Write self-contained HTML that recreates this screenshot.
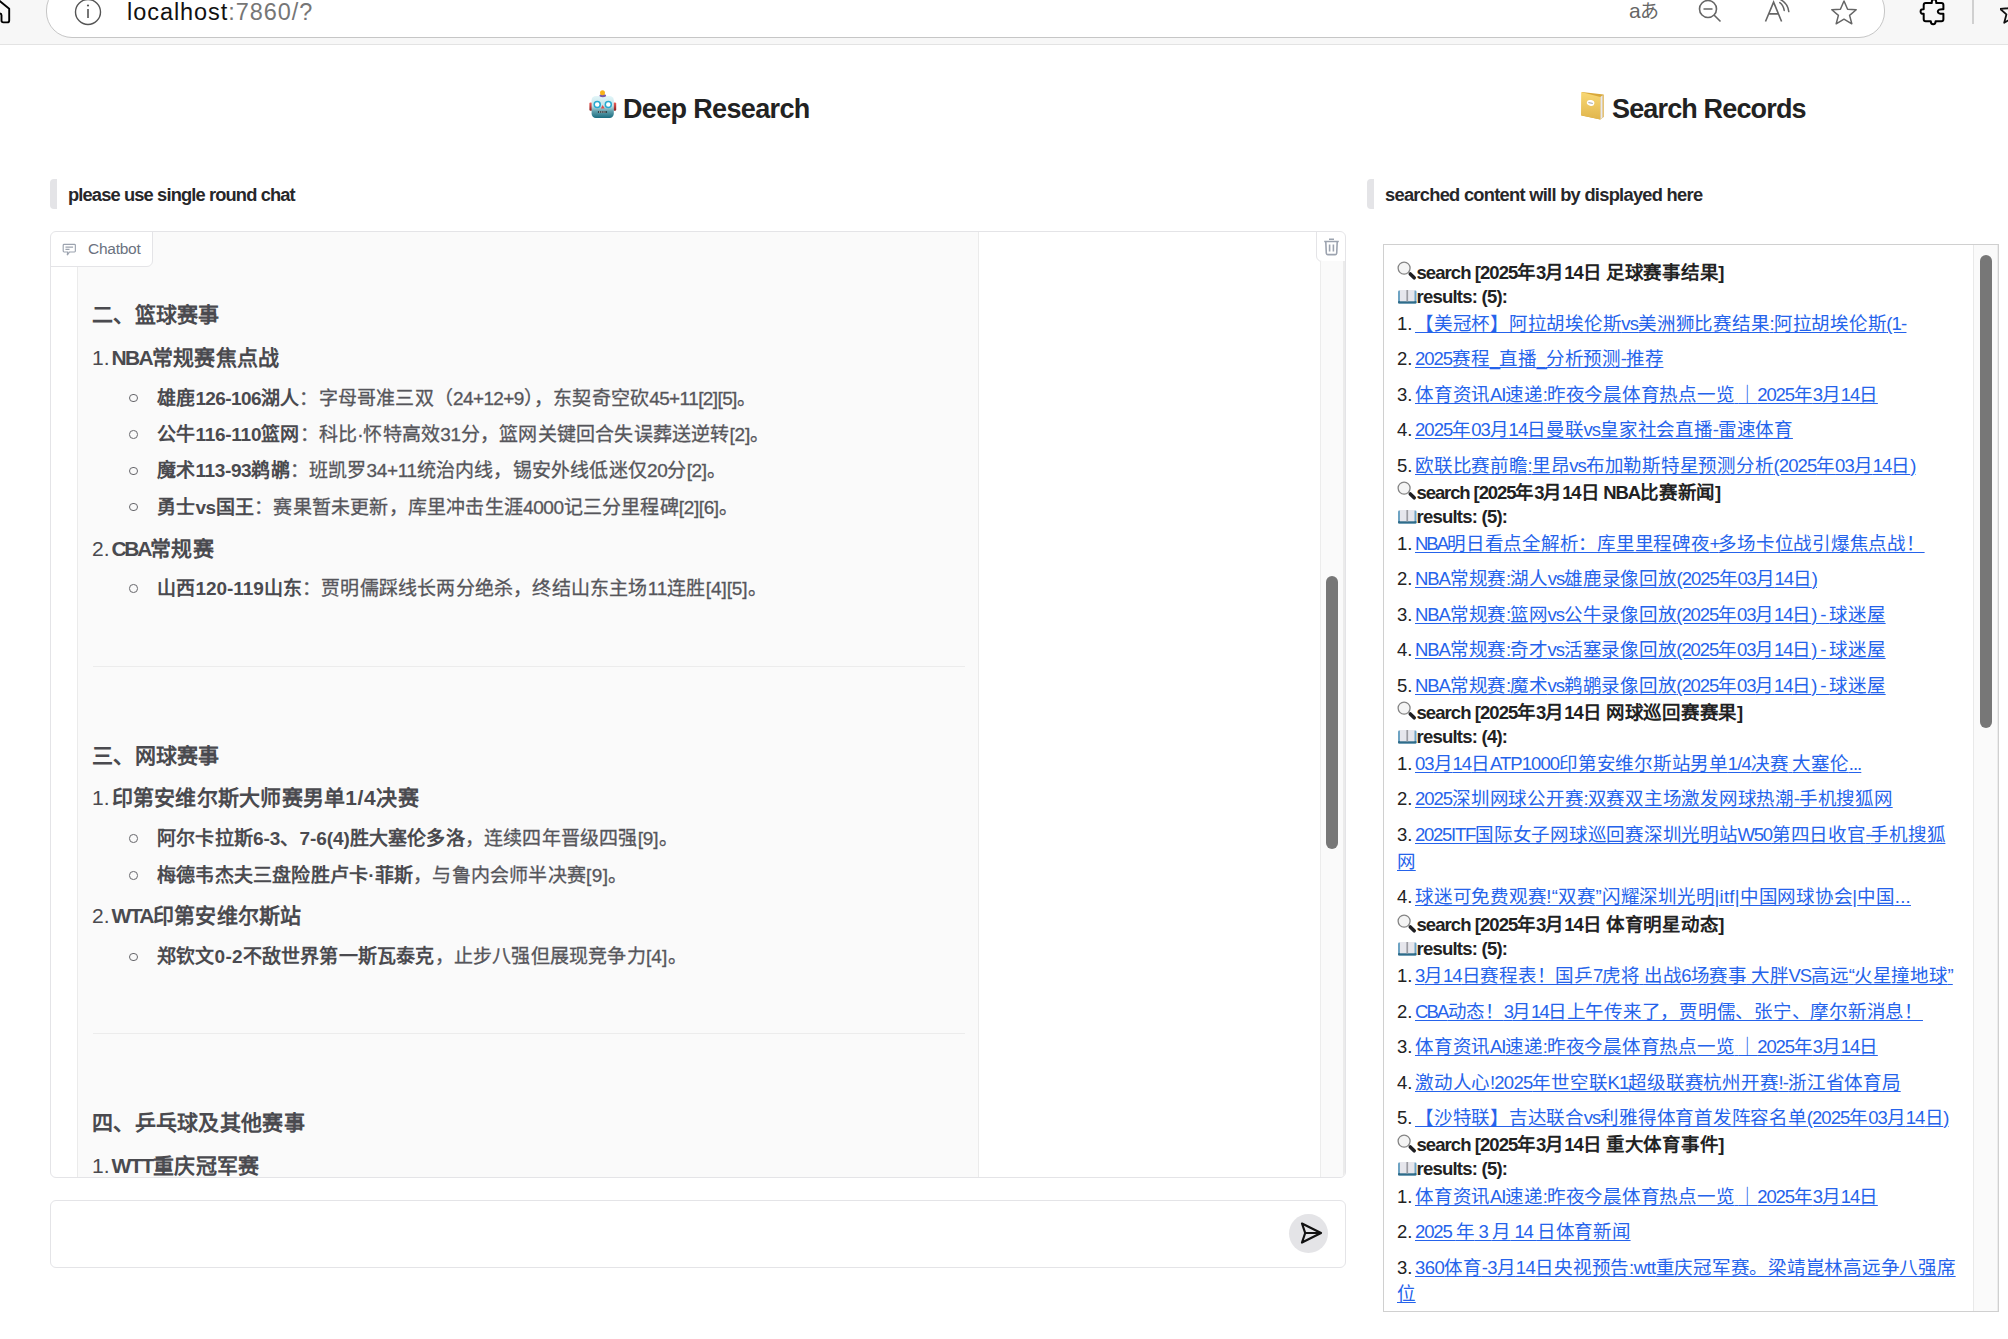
<!DOCTYPE html>
<html lang="zh-CN"><head><meta charset="utf-8">
<style>
*{box-sizing:border-box;margin:0;padding:0}
html,body{width:2008px;height:1339px;overflow:hidden;background:#fff}
body{position:relative;font-family:"Liberation Sans",sans-serif;color:#27272a}
.abs{position:absolute}
/* browser chrome */
#tb{position:absolute;left:0;top:0;width:2008px;height:45px;background:#f7f7f7;border-bottom:1px solid #e3e3e3}
#addr{position:absolute;left:45.5px;top:-16px;width:1839.5px;height:54px;background:#fff;border:1px solid #c6c6c6;border-radius:26px}
#url{position:absolute;left:127px;top:-3px;font-size:23.5px;line-height:30px;color:#111;letter-spacing:0.95px}
#url span{color:#767676}
.ico{position:absolute}
/* titles */
.title{position:absolute;font-size:27px;font-weight:bold;color:#222;line-height:40px;white-space:nowrap}
.emo2{position:absolute;font-size:26px;line-height:34px}
.info{position:absolute;top:179px;width:7px;height:30px;background:#e4e4e7;border-radius:4px 0 0 4px}
.infot{position:absolute;top:183px;font-size:18.3px;font-weight:bold;line-height:24px;color:#27272a;white-space:nowrap}
/* chatbot */
#chat{position:absolute;left:50px;top:231px;width:1296px;height:947px;border:1px solid #e4e4e7;border-radius:6px;overflow:hidden;background:#fff}
#bubble{position:absolute;left:26px;top:-40px;width:902px;height:1000px;background:#fafafa;border:1px solid #ebebeb;border-radius:6px}
#tab{position:absolute;left:-1px;top:-1px;width:103px;height:36px;background:#fff;border:1px solid #e4e4e7;border-radius:6px 0 6px 0}
#tab .t{position:absolute;left:37px;top:6px;font-size:15.5px;line-height:22px;color:#6b7280;letter-spacing:-0.25px}
#trash{position:absolute;left:1265px;top:-1px;width:30px;height:31px;background:#fff;border:1px solid #e4e4e7;border-radius:0 6px 0 6px}
#track{position:absolute;left:1269px;top:29px;width:25px;height:920px;background:#fafafa;border-left:1px solid #ececec;border-right:2px solid #ebebeb}
#thumb{position:absolute;left:1275px;top:344px;width:12px;height:273px;background:#777;border-radius:6px}
.ln,.pre{position:absolute;white-space:nowrap}
.h2{font-size:21px;font-weight:bold;color:#4a4a4f}
.h3{font-size:21px;font-weight:bold;color:#4a4a4f}
.pre.h3{font-weight:normal}
.li{font-size:19px;color:#56565b;-webkit-text-stroke:0.3px #56565b}
.li b{color:#4a4a4f;font-weight:600;-webkit-text-stroke:0}
.li b .l{font-weight:700}
.bul{position:absolute;left:78.3px;width:8.6px;height:8.6px;border:1.3px solid #66666b;border-radius:50%}
.hr{position:absolute;left:42px;width:872px;height:1.5px;background:#ececec}
/* input */
#inp{position:absolute;left:50px;top:1200px;width:1296px;height:68px;border:1px solid #e4e4e7;border-radius:6px;background:#fff}
#send{position:absolute;left:1289px;top:1214px;width:39px;height:39px;border-radius:50%;background:#e4e4e7}
/* results */
#res{position:absolute;left:1383px;top:244px;width:616px;height:1068px;border:1px solid #d0d0d0;overflow:hidden;background:#fff}
#rtrack{position:absolute;left:589px;top:0;width:25px;height:1068px;background:#fafafa;border-left:1px solid #e9e9e9;border-right:1px solid #ececec}
#rthumb{position:absolute;left:596px;top:10px;width:11.5px;height:473px;background:#777;border-radius:6px}
.rs,.rr{font-size:18.5px;font-weight:bold;color:#222}
.ri{font-size:18.5px;color:#222}
.ri a{color:#2563eb;text-decoration:underline;text-underline-offset:2px}
.emo{font-size:17px;font-weight:normal}
.bk{display:inline-block;width:19.5px;height:1px}
.book{position:absolute;left:13.5px}
.mag{position:absolute;left:10px}
</style></head><body>
<div id="tb">
  <svg class="ico" style="left:0;top:0" width="14" height="26" viewBox="0 0 14 26"><path d="M-1 0.4 L9.2 8.7 V20.4 Q9.2 22.4 7.2 22.4 H3.4 Q1.5 22.4 1.5 20.4 V15.3 Q1.5 13.4 -0.4 13.4" fill="none" stroke="#000" stroke-width="1.9" stroke-linejoin="round"/></svg>
  <div id="addr"></div>
  <svg class="ico" style="left:74px;top:-2px" width="28" height="28" viewBox="0 0 28 28"><circle cx="14" cy="14" r="12.5" fill="none" stroke="#555" stroke-width="1.4"/><rect x="13.2" y="11" width="1.6" height="9" fill="#555"/><circle cx="14" cy="7.5" r="1.1" fill="#555"/></svg>
  <div id="url">localhost<span>:7860/?</span></div>
  <!-- aあ -->
  <div class="abs" style="left:1629px;top:-3px;font-size:21px;line-height:28px;color:#666;letter-spacing:-0.5px">a<span style="font-size:19px">あ</span></div>
  <!-- zoom out -->
  <svg class="ico" style="left:1697px;top:-1px" width="28" height="26" viewBox="0 0 28 26"><circle cx="11" cy="10" r="8.5" fill="none" stroke="#666" stroke-width="1.6"/><path d="M6.5 10 H15.5 M17 16 L23.5 22.5" stroke="#666" stroke-width="1.6" fill="none"/></svg>
  <!-- A)) -->
  <svg class="ico" style="left:1763px;top:-1px" width="30" height="26" viewBox="0 0 30 26"><path d="M2.5 22.5 L10.6 3.2 L18.6 22.5 M5.6 14.9 H15.6" stroke="#666" stroke-width="1.6" fill="none"/><path d="M16.8 3.6 Q20.4 6.2 21.2 11.4 M17.6 0.6 Q24.8 4.4 25.8 12.6" stroke="#666" stroke-width="1.5" fill="none" stroke-linecap="round"/></svg>
  <!-- star -->
  <svg class="ico" style="left:1829px;top:-1px" width="30" height="28" viewBox="0 0 30 28"><path d="M15 2 L18.6 10.2 L27.2 10.8 L20.6 16.4 L22.8 24.8 L15 20.2 L7.2 24.8 L9.4 16.4 L2.8 10.8 L11.4 10.2 Z" fill="none" stroke="#666" stroke-width="1.5" stroke-linejoin="round"/></svg>
  <!-- puzzle -->
  <svg class="ico" style="left:1918px;top:-2px" width="30" height="30" viewBox="0 0 30 30"><path d="M7.7 4.9 H13.8 Q13.6 1.2 16 1.2 Q18.4 1.2 18.2 4.9 H23.4 Q25.4 4.9 25.4 6.9 V11.2 Q19.8 10.8 19.8 13.5 Q19.8 16.2 25.4 15.8 V21.2 Q25.4 23.2 23.4 23.2 H17.6 Q17.6 26.2 15.2 26.2 Q12.8 26.2 12.8 23.2 H7.7 Q5.7 23.2 5.7 21.2 V15.8 Q2.6 16.2 2.6 13.5 Q2.6 10.8 5.7 11.2 V6.9 Q5.7 4.9 7.7 4.9 Z" fill="none" stroke="#000" stroke-width="2" stroke-linejoin="round"/></svg>
  <div class="abs" style="left:1972px;top:0;width:1.5px;height:24px;background:#d0d0d0"></div>
  <svg class="ico" style="left:2000px;top:-2px" width="20" height="28" viewBox="0 0 20 28"><path d="M12 2 L15.6 10.2 L24 10.8 L17.6 16.4 L19.8 24.8 L12 20.2 L4.2 24.8 L6.4 16.4 L0 10.8 L8.4 10.2 Z" fill="none" stroke="#111" stroke-width="1.8" stroke-linejoin="round"/></svg>
</div>

<svg class="abs" style="left:584px;top:86px" width="38" height="38" viewBox="0 0 38 38"><defs><linearGradient id="rg" x1="0" y1="0" x2="0" y2="1"><stop offset="0" stop-color="#e3f6f9"/><stop offset="0.45" stop-color="#c3e3e8"/><stop offset="0.7" stop-color="#5e9eab"/><stop offset="1" stop-color="#1b6d80"/></linearGradient><linearGradient id="er" x1="0" y1="0" x2="0" y2="1"><stop offset="0" stop-color="#f0605a"/><stop offset="1" stop-color="#8a1a1a"/></linearGradient></defs><rect x="5.4" y="16.4" width="3" height="8.4" rx="1.2" fill="url(#er)"/><rect x="29.2" y="16.4" width="3" height="8.4" rx="1.2" fill="url(#er)"/><rect x="7.6" y="10" width="22.2" height="21.9" rx="4.2" fill="url(#rg)"/><ellipse cx="18.8" cy="9.6" rx="3.3" ry="1.7" fill="#7a5aa6"/><circle cx="18.5" cy="6.8" r="2.5" fill="#f8b21a"/><circle cx="13.2" cy="18.4" r="3" fill="#fff" stroke="#27a9cf" stroke-width="1.5"/><circle cx="24.3" cy="18.4" r="3" fill="#fff" stroke="#27a9cf" stroke-width="1.5"/><path d="M18.6 18.9 L16.9 22.4 H20.6 Z" fill="#e24a4a"/><rect x="13.9" y="24.9" width="9.2" height="2.2" rx="0.8" fill="#2a3b40"/><path d="M15 26 H22" stroke="#eee" stroke-width="1" stroke-dasharray="1.1 0.7"/></svg>
<div class="title" id="t1" style="left:623px;top:88.5px;letter-spacing:-0.65px">Deep Research</div>
<svg class="abs" style="left:1574px;top:86px" width="38" height="38" viewBox="0 0 38 38"><defs><linearGradient id="ng" x1="0" y1="0" x2="0" y2="1"><stop offset="0" stop-color="#f9d874"/><stop offset="1" stop-color="#e0b54c"/></linearGradient></defs><path d="M8 6 L29.7 8.6 V31 L26.3 33.6 L7.2 29.4 Z" fill="#d9a83a"/><path d="M26.3 11 L28.6 9.3 V31.6 L26.3 33.4 Z" fill="#e8e8ee"/><path d="M7.2 6.1 L26.3 10.9 V33.6 L7.2 29.3 Z" fill="url(#ng)"/><ellipse cx="16.6" cy="16.9" rx="3.8" ry="2.9" fill="#fff" transform="rotate(12 16.6 16.9)"/><path d="M14.4 16.6 L18.8 17.4" stroke="#888" stroke-width="0.8"/></svg>
<div class="title" id="t2" style="left:1612px;top:88.5px;letter-spacing:-0.85px">Search Records</div>

<div class="info" style="left:50px"></div>
<div class="infot" id="i1" style="left:68px;letter-spacing:-0.86px">please use single round chat</div>
<div class="info" style="left:1367px"></div>
<div class="infot" id="i2" style="left:1385px;letter-spacing:-0.72px">searched content will by displayed here</div>

<div id="chat">
  <div id="bubble"></div>
<div class="ln h2" style="top:66.4px;left:41px;letter-spacing:0.3px">二、篮球赛事</div>
<div class="pre h3" style="top:108.6px;left:41px">1.<span style="visibility:hidden">一</span></div><div class="ln h3" style="top:108.6px;left:60.5px;letter-spacing:0.25px"><span class="l" style="letter-spacing:-1.70px">NBA</span>常规赛焦点战</div>
<div class="bul" style="top:161.7px"></div>
<div class="ln li" style="top:150.5px;left:106px;letter-spacing:0.2px"><b>雄鹿<span class="l" style="letter-spacing:-0.60px">126-106</span>湖人</b>：字母哥准三双（<span class="l" style="letter-spacing:-0.60px">24+12+9</span>），东契奇空砍<span class="l" style="letter-spacing:-0.60px">45+11[2][5]</span>。</div>
<div class="bul" style="top:198.2px"></div>
<div class="ln li" style="top:187.0px;left:106px;letter-spacing:0.2px"><b>公牛<span class="l" style="letter-spacing:-0.26px">116-110</span>篮网</b>：科比<span class="l" style="letter-spacing:-0.26px">·</span>怀特高效<span class="l" style="letter-spacing:-0.26px">31</span>分，篮网关键回合失误葬送逆转<span class="l" style="letter-spacing:-0.26px">[2]</span>。</div>
<div class="bul" style="top:234.5px"></div>
<div class="ln li" style="top:223.3px;left:106px;letter-spacing:0.2px"><b>魔术<span class="l" style="letter-spacing:-0.37px">113-93</span>鹈鹕</b>：班凯罗<span class="l" style="letter-spacing:-0.37px">34+11</span>统治内线，锡安外线低迷仅<span class="l" style="letter-spacing:-0.37px">20</span>分<span class="l" style="letter-spacing:-0.37px">[2]</span>。</div>
<div class="bul" style="top:270.9px"></div>
<div class="ln li" style="top:259.7px;left:106px;letter-spacing:0.2px"><b>勇士<span class="l" style="letter-spacing:-0.40px">vs</span>国王</b>：赛果暂未更新，库里冲击生涯<span class="l" style="letter-spacing:-0.40px">4000</span>记三分里程碑<span class="l" style="letter-spacing:-0.40px">[2][6]</span>。</div>
<div class="pre h3" style="top:299.6px;left:41px">2.<span style="visibility:hidden">一</span></div><div class="ln h3" style="top:299.6px;left:60.5px;letter-spacing:0.25px"><span class="l" style="letter-spacing:-2.33px">CBA</span>常规赛</div>
<div class="bul" style="top:352.3px"></div>
<div class="ln li" style="top:341.1px;left:106px;letter-spacing:0.2px"><b>山西<span class="l" style="letter-spacing:-0.06px">120-119</span>山东</b>：贾明儒踩线长两分绝杀，终结山东主场<span class="l" style="letter-spacing:-0.06px">11</span>连胜<span class="l" style="letter-spacing:-0.06px">[4][5]</span>。</div>
<div class="hr" style="top:433.6px"></div>
<div class="ln h2" style="top:506.7px;left:41px;letter-spacing:0.3px">三、网球赛事</div>
<div class="pre h3" style="top:549.0px;left:41px">1.<span style="visibility:hidden">一</span></div><div class="ln h3" style="top:549.0px;left:60.5px;letter-spacing:0.25px">印第安维尔斯大师赛男单<span class="l" style="letter-spacing:0.67px">1/4</span>决赛</div>
<div class="bul" style="top:602.1px"></div>
<div class="ln li" style="top:590.9px;left:106px;letter-spacing:0.2px"><b>阿尔卡拉斯<span class="l" style="letter-spacing:-0.08px">6-3</span>、<span class="l" style="letter-spacing:-0.08px">7-6(4)</span>胜大塞伦多洛</b>，连续四年晋级四强<span class="l" style="letter-spacing:-0.08px">[9]</span>。</div>
<div class="bul" style="top:639.0px"></div>
<div class="ln li" style="top:627.8px;left:106px;letter-spacing:0.2px"><b>梅德韦杰夫三盘险胜卢卡<span class="l" style="letter-spacing:0.35px">·</span>菲斯</b>，与鲁内会师半决赛<span class="l" style="letter-spacing:0.35px">[9]</span>。</div>
<div class="pre h3" style="top:667.3px;left:41px">2.<span style="visibility:hidden">一</span></div><div class="ln h3" style="top:667.3px;left:60.5px;letter-spacing:0.25px"><span class="l" style="letter-spacing:-1.67px">WTA</span>印第安维尔斯站</div>
<div class="bul" style="top:720.5px"></div>
<div class="ln li" style="top:709.3px;left:106px;letter-spacing:0.2px"><b>郑钦文<span class="l" style="letter-spacing:0.20px">0-2</span>不敌世界第一斯瓦泰克</b>，止步八强但展现竞争力<span class="l" style="letter-spacing:0.20px">[4]</span>。</div>
<div class="hr" style="top:800.7px"></div>
<div class="ln h2" style="top:874.2px;left:41px;letter-spacing:0.3px">四、乒乓球及其他赛事</div>
<div class="pre h3" style="top:916.6px;left:41px">1.<span style="visibility:hidden">一</span></div><div class="ln h3" style="top:916.6px;left:60.5px;letter-spacing:0.25px"><span class="l" style="letter-spacing:-1.33px">WTT</span>重庆冠军赛</div>

  <div id="tab">
    <svg class="abs" style="left:11px;top:11px" width="15" height="13.5" viewBox="0 0 16 15"><path d="M2 1.5 H13.5 Q14.5 1.5 14.5 2.5 V9 Q14.5 10 13.5 10 H8 L5.5 13.5 L6 10 H2 Q1 10 1 9 V2.5 Q1 1.5 2 1.5 Z" fill="none" stroke="#9ca3af" stroke-width="1.3"/><path d="M3.5 4.5 H12 M3.5 7 H8" stroke="#9ca3af" stroke-width="1.3"/></svg>
    <div class="t">Chatbot</div>
  </div>
  <div id="trash">
    <svg class="abs" style="left:6px;top:6px" width="17" height="18" viewBox="0 0 17 18"><path d="M6 1.2 H11 M1.2 3.5 H15.8" stroke="#9ca3af" stroke-width="1.6"/><path d="M2.8 4 L3.3 15.2 Q3.4 16.6 4.8 16.6 H12.2 Q13.6 16.6 13.7 15.2 L14.2 4" fill="none" stroke="#9ca3af" stroke-width="1.6"/><path d="M6.6 6.5 V13.5 M10.4 6.5 V13.5" stroke="#9ca3af" stroke-width="1.6"/></svg>
  </div>
  <div id="track"></div>
  <div id="thumb"></div>
</div>

<div id="inp"></div>
<div id="send"></div>
<svg class="abs" style="left:1299px;top:1221px" width="25" height="24" viewBox="0 0 25 24"><path d="M3 2.5 L22 12 L3 21.5 L6.2 12 Z M6.2 12 H22" fill="none" stroke="#111" stroke-width="2.2" stroke-linejoin="round"/></svg>

<div id="res">
<div class="ln rs" style="top:12.5px;left:13px;letter-spacing:-0.25px"><span class="bk"></span><span class="l" style="letter-spacing:-0.94px">search [2025</span>年<span class="l" style="letter-spacing:-0.94px">3</span>月<span class="l" style="letter-spacing:-0.94px">14</span>日<span class="l" style="letter-spacing:-0.94px"> </span>足球赛事结果<span class="l" style="letter-spacing:-0.94px">]</span></div>
<svg class="mag" style="top:13.0px" width="28" height="26" viewBox="0 0 28 26"><circle cx="10.1" cy="10.1" r="6" fill="#f4f4f4" stroke="#858585" stroke-width="1.3"/><path d="M16.3 15.9 L20.2 19.8" stroke="#1e1e22" stroke-width="3.6" stroke-linecap="round"/></svg><div class="ln rr" style="top:40.6px;left:13px;letter-spacing:0px"><span class="bk"></span><span class="l" style="letter-spacing:-0.77px">results: (5):</span></div>
<svg class="book" style="top:44.5px" width="19" height="14" viewBox="0 0 19 14"><rect x="0" y="0.5" width="18.5" height="13" rx="1.2" fill="#6ea3c3"/><rect x="0" y="11" width="18.5" height="2.5" rx="1" fill="#2f6c8a"/><rect x="2" y="0" width="14.5" height="11.3" fill="#e6e6ec"/><rect x="8.4" y="0" width="1.7" height="11.5" fill="#9b9ba1"/></svg><div class="pre ri" style="top:63.8px;left:13px">1.<span style="visibility:hidden">一</span></div><div class="ln ri" style="top:63.8px;left:31px;letter-spacing:-0.25px"><a>【美冠杯】阿拉胡埃伦斯<span class="l" style="letter-spacing:-0.80px">vs</span>美洲狮比赛结果<span class="l" style="letter-spacing:-0.80px">:</span>阿拉胡埃伦斯<span class="l" style="letter-spacing:-0.80px">(1-</span></a></div>
<div class="pre ri" style="top:99.3px;left:13px">2.<span style="visibility:hidden">一</span></div><div class="ln ri" style="top:99.3px;left:31px;letter-spacing:-0.25px"><a><span class="l" style="letter-spacing:-1.00px">2025</span>赛程<span class="l" style="letter-spacing:-1.00px">_</span>直播<span class="l" style="letter-spacing:-1.00px">_</span>分析预测<span class="l" style="letter-spacing:-1.00px">-</span>推荐</a></div>
<div class="pre ri" style="top:134.8px;left:13px">3.<span style="visibility:hidden">一</span></div><div class="ln ri" style="top:134.8px;left:31px;letter-spacing:-0.25px"><a>体育资讯<span class="l" style="letter-spacing:-1.09px">AI</span>速递<span class="l" style="letter-spacing:-1.09px">:</span>昨夜今晨体育热点一览<span class="l" style="letter-spacing:-1.09px"> </span>｜<span class="l" style="letter-spacing:-1.09px">2025</span>年<span class="l" style="letter-spacing:-1.09px">3</span>月<span class="l" style="letter-spacing:-1.09px">14</span>日</a></div>
<div class="pre ri" style="top:170.3px;left:13px">4.<span style="visibility:hidden">一</span></div><div class="ln ri" style="top:170.3px;left:31px;letter-spacing:-0.25px"><a><span class="l" style="letter-spacing:-0.94px">2025</span>年<span class="l" style="letter-spacing:-0.94px">03</span>月<span class="l" style="letter-spacing:-0.94px">14</span>日曼联<span class="l" style="letter-spacing:-0.94px">vs</span>皇家社会直播<span class="l" style="letter-spacing:-0.94px">-</span>雷速体育</a></div>
<div class="pre ri" style="top:205.8px;left:13px">5.<span style="visibility:hidden">一</span></div><div class="ln ri" style="top:205.8px;left:31px;letter-spacing:-0.25px"><a>欧联比赛前瞻<span class="l" style="letter-spacing:-0.89px">:</span>里昂<span class="l" style="letter-spacing:-0.89px">vs</span>布加勒斯特星预测分析<span class="l" style="letter-spacing:-0.89px">(2025</span>年<span class="l" style="letter-spacing:-0.89px">03</span>月<span class="l" style="letter-spacing:-0.89px">14</span>日<span class="l" style="letter-spacing:-0.89px">)</span></a></div>
<div class="ln rs" style="top:232.5px;left:13px;letter-spacing:-0.25px"><span class="bk"></span><span class="l" style="letter-spacing:-1.10px">search [2025</span>年<span class="l" style="letter-spacing:-1.10px">3</span>月<span class="l" style="letter-spacing:-1.10px">14</span>日<span class="l" style="letter-spacing:-1.10px"> NBA</span>比赛新闻<span class="l" style="letter-spacing:-1.10px">]</span></div>
<svg class="mag" style="top:233.0px" width="28" height="26" viewBox="0 0 28 26"><circle cx="10.1" cy="10.1" r="6" fill="#f4f4f4" stroke="#858585" stroke-width="1.3"/><path d="M16.3 15.9 L20.2 19.8" stroke="#1e1e22" stroke-width="3.6" stroke-linecap="round"/></svg><div class="ln rr" style="top:260.6px;left:13px;letter-spacing:0px"><span class="bk"></span><span class="l" style="letter-spacing:-0.77px">results: (5):</span></div>
<svg class="book" style="top:264.5px" width="19" height="14" viewBox="0 0 19 14"><rect x="0" y="0.5" width="18.5" height="13" rx="1.2" fill="#6ea3c3"/><rect x="0" y="11" width="18.5" height="2.5" rx="1" fill="#2f6c8a"/><rect x="2" y="0" width="14.5" height="11.3" fill="#e6e6ec"/><rect x="8.4" y="0" width="1.7" height="11.5" fill="#9b9ba1"/></svg><div class="pre ri" style="top:283.8px;left:13px">1.<span style="visibility:hidden">一</span></div><div class="ln ri" style="top:283.8px;left:31px;letter-spacing:-0.25px"><a><span class="l" style="letter-spacing:-2.00px">NBA</span>明日看点全解析：库里里程碑夜<span class="l" style="letter-spacing:-2.00px">+</span>多场卡位战引爆焦点战！</a></div>
<div class="pre ri" style="top:319.3px;left:13px">2.<span style="visibility:hidden">一</span></div><div class="ln ri" style="top:319.3px;left:31px;letter-spacing:-0.25px"><a><span class="l" style="letter-spacing:-1.06px">NBA</span>常规赛<span class="l" style="letter-spacing:-1.06px">:</span>湖人<span class="l" style="letter-spacing:-1.06px">vs</span>雄鹿录像回放<span class="l" style="letter-spacing:-1.06px">(2025</span>年<span class="l" style="letter-spacing:-1.06px">03</span>月<span class="l" style="letter-spacing:-1.06px">14</span>日<span class="l" style="letter-spacing:-1.06px">)</span></a></div>
<div class="pre ri" style="top:354.8px;left:13px">3.<span style="visibility:hidden">一</span></div><div class="ln ri" style="top:354.8px;left:31px;letter-spacing:-0.25px"><a><span class="l" style="letter-spacing:-1.10px">NBA</span>常规赛<span class="l" style="letter-spacing:-1.10px">:</span>篮网<span class="l" style="letter-spacing:-1.10px">vs</span>公牛录像回放<span class="l" style="letter-spacing:-1.10px">(2025</span>年<span class="l" style="letter-spacing:-1.10px">03</span>月<span class="l" style="letter-spacing:-1.10px">14</span>日<span class="l" style="letter-spacing:-1.10px">) - </span>球迷屋</a></div>
<div class="pre ri" style="top:390.3px;left:13px">4.<span style="visibility:hidden">一</span></div><div class="ln ri" style="top:390.3px;left:31px;letter-spacing:-0.25px"><a><span class="l" style="letter-spacing:-1.10px">NBA</span>常规赛<span class="l" style="letter-spacing:-1.10px">:</span>奇才<span class="l" style="letter-spacing:-1.10px">vs</span>活塞录像回放<span class="l" style="letter-spacing:-1.10px">(2025</span>年<span class="l" style="letter-spacing:-1.10px">03</span>月<span class="l" style="letter-spacing:-1.10px">14</span>日<span class="l" style="letter-spacing:-1.10px">) - </span>球迷屋</a></div>
<div class="pre ri" style="top:425.8px;left:13px">5.<span style="visibility:hidden">一</span></div><div class="ln ri" style="top:425.8px;left:31px;letter-spacing:-0.25px"><a><span class="l" style="letter-spacing:-1.10px">NBA</span>常规赛<span class="l" style="letter-spacing:-1.10px">:</span>魔术<span class="l" style="letter-spacing:-1.10px">vs</span>鹈鹕录像回放<span class="l" style="letter-spacing:-1.10px">(2025</span>年<span class="l" style="letter-spacing:-1.10px">03</span>月<span class="l" style="letter-spacing:-1.10px">14</span>日<span class="l" style="letter-spacing:-1.10px">) - </span>球迷屋</a></div>
<div class="ln rs" style="top:452.5px;left:13px;letter-spacing:-0.25px"><span class="bk"></span><span class="l" style="letter-spacing:-0.94px">search [2025</span>年<span class="l" style="letter-spacing:-0.94px">3</span>月<span class="l" style="letter-spacing:-0.94px">14</span>日<span class="l" style="letter-spacing:-0.94px"> </span>网球巡回赛赛果<span class="l" style="letter-spacing:-0.94px">]</span></div>
<svg class="mag" style="top:453.0px" width="28" height="26" viewBox="0 0 28 26"><circle cx="10.1" cy="10.1" r="6" fill="#f4f4f4" stroke="#858585" stroke-width="1.3"/><path d="M16.3 15.9 L20.2 19.8" stroke="#1e1e22" stroke-width="3.6" stroke-linecap="round"/></svg><div class="ln rr" style="top:480.6px;left:13px;letter-spacing:0px"><span class="bk"></span><span class="l" style="letter-spacing:-0.77px">results: (4):</span></div>
<svg class="book" style="top:484.5px" width="19" height="14" viewBox="0 0 19 14"><rect x="0" y="0.5" width="18.5" height="13" rx="1.2" fill="#6ea3c3"/><rect x="0" y="11" width="18.5" height="2.5" rx="1" fill="#2f6c8a"/><rect x="2" y="0" width="14.5" height="11.3" fill="#e6e6ec"/><rect x="8.4" y="0" width="1.7" height="11.5" fill="#9b9ba1"/></svg><div class="pre ri" style="top:503.8px;left:13px">1.<span style="visibility:hidden">一</span></div><div class="ln ri" style="top:503.8px;left:31px;letter-spacing:-0.25px"><a><span class="l" style="letter-spacing:-0.94px">03</span>月<span class="l" style="letter-spacing:-0.94px">14</span>日<span class="l" style="letter-spacing:-0.94px">ATP1000</span>印第安维尔斯站男单<span class="l" style="letter-spacing:-0.94px">1/4</span>决赛<span class="l" style="letter-spacing:-0.94px"> </span>大塞伦<span class="l" style="letter-spacing:-0.94px">...</span></a></div>
<div class="pre ri" style="top:539.3px;left:13px">2.<span style="visibility:hidden">一</span></div><div class="ln ri" style="top:539.3px;left:31px;letter-spacing:-0.25px"><a><span class="l" style="letter-spacing:-1.00px">2025</span>深圳网球公开赛<span class="l" style="letter-spacing:-1.00px">:</span>双赛双主场激发网球热潮<span class="l" style="letter-spacing:-1.00px">-</span>手机搜狐网</a></div>
<div class="pre ri" style="top:574.8px;left:13px">3.<span style="visibility:hidden">一</span></div><div class="ln ri" style="top:574.8px;left:31px;letter-spacing:-0.25px"><a><span class="l" style="letter-spacing:-1.27px">2025ITF</span>国际女子网球巡回赛深圳光明站<span class="l" style="letter-spacing:-1.27px">W50</span>第四日收官<span class="l" style="letter-spacing:-1.27px">-</span>手机搜狐</a></div>
<div class="ln ri" style="top:601.6px;left:13px;letter-spacing:-0.25px"><a>网</a></div>
<div class="pre ri" style="top:637.1px;left:13px">4.<span style="visibility:hidden">一</span></div><div class="ln ri" style="top:637.1px;left:31px;letter-spacing:-0.25px"><a>球迷可免费观赛<span class="l" style="letter-spacing:0.25px">!“</span>双赛<span class="l" style="letter-spacing:0.25px">”</span>闪耀深圳光明<span class="l" style="letter-spacing:0.25px">|itf|</span>中国网球协会<span class="l" style="letter-spacing:0.25px">|</span>中国<span class="l" style="letter-spacing:0.25px">...</span></a></div>
<div class="ln rs" style="top:665.0px;left:13px;letter-spacing:-0.25px"><span class="bk"></span><span class="l" style="letter-spacing:-0.94px">search [2025</span>年<span class="l" style="letter-spacing:-0.94px">3</span>月<span class="l" style="letter-spacing:-0.94px">14</span>日<span class="l" style="letter-spacing:-0.94px"> </span>体育明星动态<span class="l" style="letter-spacing:-0.94px">]</span></div>
<svg class="mag" style="top:665.5px" width="28" height="26" viewBox="0 0 28 26"><circle cx="10.1" cy="10.1" r="6" fill="#f4f4f4" stroke="#858585" stroke-width="1.3"/><path d="M16.3 15.9 L20.2 19.8" stroke="#1e1e22" stroke-width="3.6" stroke-linecap="round"/></svg><div class="ln rr" style="top:693.1px;left:13px;letter-spacing:0px"><span class="bk"></span><span class="l" style="letter-spacing:-0.77px">results: (5):</span></div>
<svg class="book" style="top:697.0px" width="19" height="14" viewBox="0 0 19 14"><rect x="0" y="0.5" width="18.5" height="13" rx="1.2" fill="#6ea3c3"/><rect x="0" y="11" width="18.5" height="2.5" rx="1" fill="#2f6c8a"/><rect x="2" y="0" width="14.5" height="11.3" fill="#e6e6ec"/><rect x="8.4" y="0" width="1.7" height="11.5" fill="#9b9ba1"/></svg><div class="pre ri" style="top:716.3px;left:13px">1.<span style="visibility:hidden">一</span></div><div class="ln ri" style="top:716.3px;left:31px;letter-spacing:-0.25px"><a><span class="l" style="letter-spacing:-1.00px">3</span>月<span class="l" style="letter-spacing:-1.00px">14</span>日赛程表！国乒<span class="l" style="letter-spacing:-1.00px">7</span>虎将<span class="l" style="letter-spacing:-1.00px"> </span>出战<span class="l" style="letter-spacing:-1.00px">6</span>场赛事<span class="l" style="letter-spacing:-1.00px"> </span>大胖<span class="l" style="letter-spacing:-1.00px">VS</span>高远<span class="l" style="letter-spacing:-1.00px">“</span>火星撞地球<span class="l" style="letter-spacing:-1.00px">”</span></a></div>
<div class="pre ri" style="top:751.8px;left:13px">2.<span style="visibility:hidden">一</span></div><div class="ln ri" style="top:751.8px;left:31px;letter-spacing:-0.25px"><a><span class="l" style="letter-spacing:-1.83px">CBA</span>动态！<span class="l" style="letter-spacing:-1.83px">3</span>月<span class="l" style="letter-spacing:-1.83px">14</span>日上午传来了，贾明儒、张宁、摩尔新消息！</a></div>
<div class="pre ri" style="top:787.3px;left:13px">3.<span style="visibility:hidden">一</span></div><div class="ln ri" style="top:787.3px;left:31px;letter-spacing:-0.25px"><a>体育资讯<span class="l" style="letter-spacing:-1.09px">AI</span>速递<span class="l" style="letter-spacing:-1.09px">:</span>昨夜今晨体育热点一览<span class="l" style="letter-spacing:-1.09px"> </span>｜<span class="l" style="letter-spacing:-1.09px">2025</span>年<span class="l" style="letter-spacing:-1.09px">3</span>月<span class="l" style="letter-spacing:-1.09px">14</span>日</a></div>
<div class="pre ri" style="top:822.8px;left:13px">4.<span style="visibility:hidden">一</span></div><div class="ln ri" style="top:822.8px;left:31px;letter-spacing:-0.25px"><a>激动人心<span class="l" style="letter-spacing:-0.78px">!2025</span>年世空联<span class="l" style="letter-spacing:-0.78px">K1</span>超级联赛杭州开赛<span class="l" style="letter-spacing:-0.78px">!-</span>浙江省体育局</a></div>
<div class="pre ri" style="top:858.3px;left:13px">5.<span style="visibility:hidden">一</span></div><div class="ln ri" style="top:858.3px;left:31px;letter-spacing:-0.25px"><a>【沙特联】吉达联合<span class="l" style="letter-spacing:-0.91px">vs</span>利雅得体育首发阵容名单<span class="l" style="letter-spacing:-0.91px">(2025</span>年<span class="l" style="letter-spacing:-0.91px">03</span>月<span class="l" style="letter-spacing:-0.91px">14</span>日<span class="l" style="letter-spacing:-0.91px">)</span></a></div>
<div class="ln rs" style="top:885.2px;left:13px;letter-spacing:-0.25px"><span class="bk"></span><span class="l" style="letter-spacing:-0.94px">search [2025</span>年<span class="l" style="letter-spacing:-0.94px">3</span>月<span class="l" style="letter-spacing:-0.94px">14</span>日<span class="l" style="letter-spacing:-0.94px"> </span>重大体育事件<span class="l" style="letter-spacing:-0.94px">]</span></div>
<svg class="mag" style="top:885.7px" width="28" height="26" viewBox="0 0 28 26"><circle cx="10.1" cy="10.1" r="6" fill="#f4f4f4" stroke="#858585" stroke-width="1.3"/><path d="M16.3 15.9 L20.2 19.8" stroke="#1e1e22" stroke-width="3.6" stroke-linecap="round"/></svg><div class="ln rr" style="top:913.3px;left:13px;letter-spacing:0px"><span class="bk"></span><span class="l" style="letter-spacing:-0.77px">results: (5):</span></div>
<svg class="book" style="top:917.2px" width="19" height="14" viewBox="0 0 19 14"><rect x="0" y="0.5" width="18.5" height="13" rx="1.2" fill="#6ea3c3"/><rect x="0" y="11" width="18.5" height="2.5" rx="1" fill="#2f6c8a"/><rect x="2" y="0" width="14.5" height="11.3" fill="#e6e6ec"/><rect x="8.4" y="0" width="1.7" height="11.5" fill="#9b9ba1"/></svg><div class="pre ri" style="top:936.5px;left:13px">1.<span style="visibility:hidden">一</span></div><div class="ln ri" style="top:936.5px;left:31px;letter-spacing:-0.25px"><a>体育资讯<span class="l" style="letter-spacing:-1.09px">AI</span>速递<span class="l" style="letter-spacing:-1.09px">:</span>昨夜今晨体育热点一览<span class="l" style="letter-spacing:-1.09px"> </span>｜<span class="l" style="letter-spacing:-1.09px">2025</span>年<span class="l" style="letter-spacing:-1.09px">3</span>月<span class="l" style="letter-spacing:-1.09px">14</span>日</a></div>
<div class="pre ri" style="top:972.0px;left:13px">2.<span style="visibility:hidden">一</span></div><div class="ln ri" style="top:972.0px;left:31px;letter-spacing:-0.25px"><a><span class="l" style="letter-spacing:-1.12px">2025 </span>年<span class="l" style="letter-spacing:-1.12px"> 3 </span>月<span class="l" style="letter-spacing:-1.12px"> 14 </span>日体育新闻</a></div>
<div class="pre ri" style="top:1007.5px;left:13px">3.<span style="visibility:hidden">一</span></div><div class="ln ri" style="top:1007.5px;left:31px;letter-spacing:-0.25px"><a><span class="l" style="letter-spacing:-0.55px">360</span>体育<span class="l" style="letter-spacing:-0.55px">-3</span>月<span class="l" style="letter-spacing:-0.55px">14</span>日央视预告<span class="l" style="letter-spacing:-0.55px">:wtt</span>重庆冠军赛。梁靖崑林高远争八强席</a></div>
<div class="ln ri" style="top:1034.3px;left:13px;letter-spacing:-0.25px"><a>位</a></div>

  <div id="rtrack"></div>
  <div id="rthumb"></div>
</div>
</body></html>
